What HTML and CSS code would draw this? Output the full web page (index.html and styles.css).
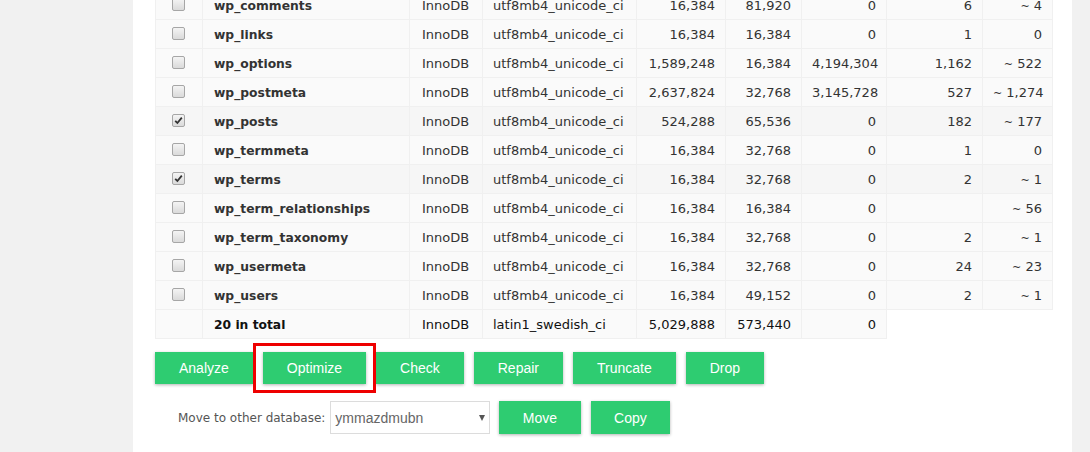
FILE: index.html
```html
<!DOCTYPE html>
<html lang="en">
<head>
<meta charset="utf-8">
<title>Database tables</title>
<link rel="stylesheet" href="styles.css">
</head>
<body>
<div class="panel">
  <table class="tables">
    <colgroup>
      <col class="c-cb"><col class="c-name"><col class="c-engine"><col class="c-coll"><col class="c-size"><col class="c-index"><col class="c-free"><col class="c-rows"><col class="c-ovh">
    </colgroup>
    <tbody>
      <tr><td class="cb"><span class="check"></span></td><th class="name">wp_comments</th><td class="engine">InnoDB</td><td class="coll">utf8mb4_unicode_ci</td><td class="num">16,384</td><td class="num">81,920</td><td class="num">0</td><td class="num">6</td><td class="num"><span class="tilde">~</span> 4</td></tr>
      <tr><td class="cb"><span class="check"></span></td><th class="name">wp_links</th><td class="engine">InnoDB</td><td class="coll">utf8mb4_unicode_ci</td><td class="num">16,384</td><td class="num">16,384</td><td class="num">0</td><td class="num">1</td><td class="num">0</td></tr>
      <tr><td class="cb"><span class="check"></span></td><th class="name">wp_options</th><td class="engine">InnoDB</td><td class="coll">utf8mb4_unicode_ci</td><td class="num">1,589,248</td><td class="num">16,384</td><td class="num">4,194,304</td><td class="num">1,162</td><td class="num"><span class="tilde">~</span> 522</td></tr>
      <tr><td class="cb"><span class="check"></span></td><th class="name">wp_postmeta</th><td class="engine">InnoDB</td><td class="coll">utf8mb4_unicode_ci</td><td class="num">2,637,824</td><td class="num">32,768</td><td class="num">3,145,728</td><td class="num">527</td><td class="num"><span class="tilde">~</span> 1,274</td></tr>
      <tr class="marked"><td class="cb"><span class="check on"><svg viewBox="0 0 13 13" width="13" height="13"><path d="M3.2 6.8 L5.4 9 L9.8 3.6" fill="none" stroke="#333" stroke-width="1.8"/></svg></span></td><th class="name">wp_posts</th><td class="engine">InnoDB</td><td class="coll">utf8mb4_unicode_ci</td><td class="num">524,288</td><td class="num">65,536</td><td class="num">0</td><td class="num">182</td><td class="num"><span class="tilde">~</span> 177</td></tr>
      <tr><td class="cb"><span class="check"></span></td><th class="name">wp_termmeta</th><td class="engine">InnoDB</td><td class="coll">utf8mb4_unicode_ci</td><td class="num">16,384</td><td class="num">32,768</td><td class="num">0</td><td class="num">1</td><td class="num">0</td></tr>
      <tr class="marked"><td class="cb"><span class="check on"><svg viewBox="0 0 13 13" width="13" height="13"><path d="M3.2 6.8 L5.4 9 L9.8 3.6" fill="none" stroke="#333" stroke-width="1.8"/></svg></span></td><th class="name">wp_terms</th><td class="engine">InnoDB</td><td class="coll">utf8mb4_unicode_ci</td><td class="num">16,384</td><td class="num">32,768</td><td class="num">0</td><td class="num">2</td><td class="num"><span class="tilde">~</span> 1</td></tr>
      <tr><td class="cb"><span class="check"></span></td><th class="name">wp_term_relationships</th><td class="engine">InnoDB</td><td class="coll">utf8mb4_unicode_ci</td><td class="num">16,384</td><td class="num">16,384</td><td class="num">0</td><td class="num"></td><td class="num"><span class="tilde">~</span> 56</td></tr>
      <tr><td class="cb"><span class="check"></span></td><th class="name">wp_term_taxonomy</th><td class="engine">InnoDB</td><td class="coll">utf8mb4_unicode_ci</td><td class="num">16,384</td><td class="num">32,768</td><td class="num">0</td><td class="num">2</td><td class="num"><span class="tilde">~</span> 1</td></tr>
      <tr><td class="cb"><span class="check"></span></td><th class="name">wp_usermeta</th><td class="engine">InnoDB</td><td class="coll">utf8mb4_unicode_ci</td><td class="num">16,384</td><td class="num">32,768</td><td class="num">0</td><td class="num">24</td><td class="num"><span class="tilde">~</span> 23</td></tr>
      <tr><td class="cb"><span class="check"></span></td><th class="name">wp_users</th><td class="engine">InnoDB</td><td class="coll">utf8mb4_unicode_ci</td><td class="num">16,384</td><td class="num">49,152</td><td class="num">0</td><td class="num">2</td><td class="num"><span class="tilde">~</span> 1</td></tr>
      <tr class="total"><td class="cb"></td><th class="name">20 in total</th><td class="engine">InnoDB</td><td class="coll">latin1_swedish_ci</td><td class="num">5,029,888</td><td class="num">573,440</td><td class="num">0</td></tr>
    </tbody>
  </table>

  <div class="actions">
    <button class="btn">Analyze</button>
    <button class="btn optimize">Optimize</button>
    <button class="btn">Check</button>
    <button class="btn">Repair</button>
    <button class="btn">Truncate</button>
    <button class="btn">Drop</button>
  </div>

  <div class="move-row">
    <label class="move-label" for="db">Move to other database:</label>
    <div class="select-wrap">
      <select id="db" class="select"><option>ymmazdmubn</option></select>
    </div>
    <button class="btn btn-tall">Move</button>
    <button class="btn btn-tall">Copy</button>
  </div>
</div>
</body>
</html>
```

FILE: styles.css
```css
html, body {
  margin: 0;
  padding: 0;
}
body {
  background: #f1f1f1;
  height: 452px;
  overflow: hidden;
}
.panel {
  display: flow-root;
  margin-left: 133px;
  width: 939px;
  min-height: 452px;
  background: #fff;
  box-sizing: border-box;
  padding: 0 20px 0 22px;
}
.tables {
  margin-top: -10px;
  border-collapse: collapse;
  table-layout: fixed;
  width: 897px;
  font-family: "DejaVu Sans", Verdana, sans-serif;
  font-size: 13px;
  color: #333;
}
.c-cb { width: 47px; }
.c-name { width: 207px; }
.c-engine { width: 73px; }
.c-coll { width: 154px; }
.c-size { width: 89px; }
.c-index { width: 76px; }
.c-free { width: 85px; }
.c-rows { width: 96px; }
.c-ovh { width: 70px; }

.tables td, .tables th {
  height: 28px;
  padding: 1px 10px 0;
  box-sizing: border-box;
  border: 1px solid #f0f0f0;
  background: #fafafa;
  white-space: nowrap;
  vertical-align: middle;
}
.tables tr { height: 29px; }
.tables tr.marked td, .tables tr.marked th {
  background: #f6f6f6;
}
.tables .cb {
  padding: 0;
  text-align: center;
}
.tables .name {
  text-align: left;
  font-weight: bold;
  font-size: 12.3px;
  padding-left: 11px;
  color: #333;
}
.tables .engine { padding-left: 12px; }
.tables .coll { padding-left: 10px; }
.tables .num { text-align: right; }
.tilde {
  font-size: 11px;
}
.tables tr.total td, .tables tr.total th {
  color: #111;
}
.check {
  display: inline-block;
  width: 11px;
  height: 11px;
  border: 1px solid #a6a6a6;
  border-radius: 2px;
  background: linear-gradient(#f4f4f4, #dadada);
  vertical-align: middle;
  position: relative;
  top: -2px;
  left: -1px;
  overflow: hidden;
}
.check svg {
  display: block;
  margin: -1px 0 0 -1px;
}

.actions {
  display: flex;
  gap: 10px;
  margin-top: 13px;
}
.btn {
  height: 32px;
  padding: 0 24px;
  border: 0;
  border-radius: 0;
  background: #2ecc71;
  color: #fff;
  font-family: "Liberation Sans", Arial, sans-serif;
  font-size: 14px;
  box-shadow: 0 1px 3px rgba(0, 0, 0, 0.3);
  cursor: pointer;
}
.btn-tall {
  height: 33px;
  padding: 0 23.5px;
}
.optimize {
  position: relative;
}
.optimize::after {
  content: "";
  position: absolute;
  left: -10px;
  right: -10px;
  top: -9px;
  bottom: -9px;
  border: 3px solid #ee0000;
  pointer-events: none;
}

.move-row {
  display: flex;
  align-items: center;
  margin-top: 17px;
  padding-left: 23px;
}
.move-label {
  font-family: "DejaVu Sans", Verdana, sans-serif;
  font-size: 12px;
  color: #555;
  margin-right: 5px;
}
.select-wrap {
  position: relative;
  width: 160px;
  height: 33px;
  margin-right: 9px;
}
.select {
  -webkit-appearance: none;
  appearance: none;
  width: 100%;
  height: 100%;
  box-sizing: border-box;
  border: 1px solid #dcdcdc;
  border-radius: 0;
  background: #fff;
  padding: 0 20px 0 4px;
  font-family: "Liberation Sans", Arial, sans-serif;
  font-size: 14px;
  color: #666;
}
.select-wrap::after {
  content: "";
  position: absolute;
  right: 5px;
  top: 14px;
  border-left: 3.5px solid transparent;
  border-right: 3.5px solid transparent;
  border-top: 6px solid #555;
  pointer-events: none;
}
.move-row .btn + .btn {
  margin-left: 10px;
}
```
